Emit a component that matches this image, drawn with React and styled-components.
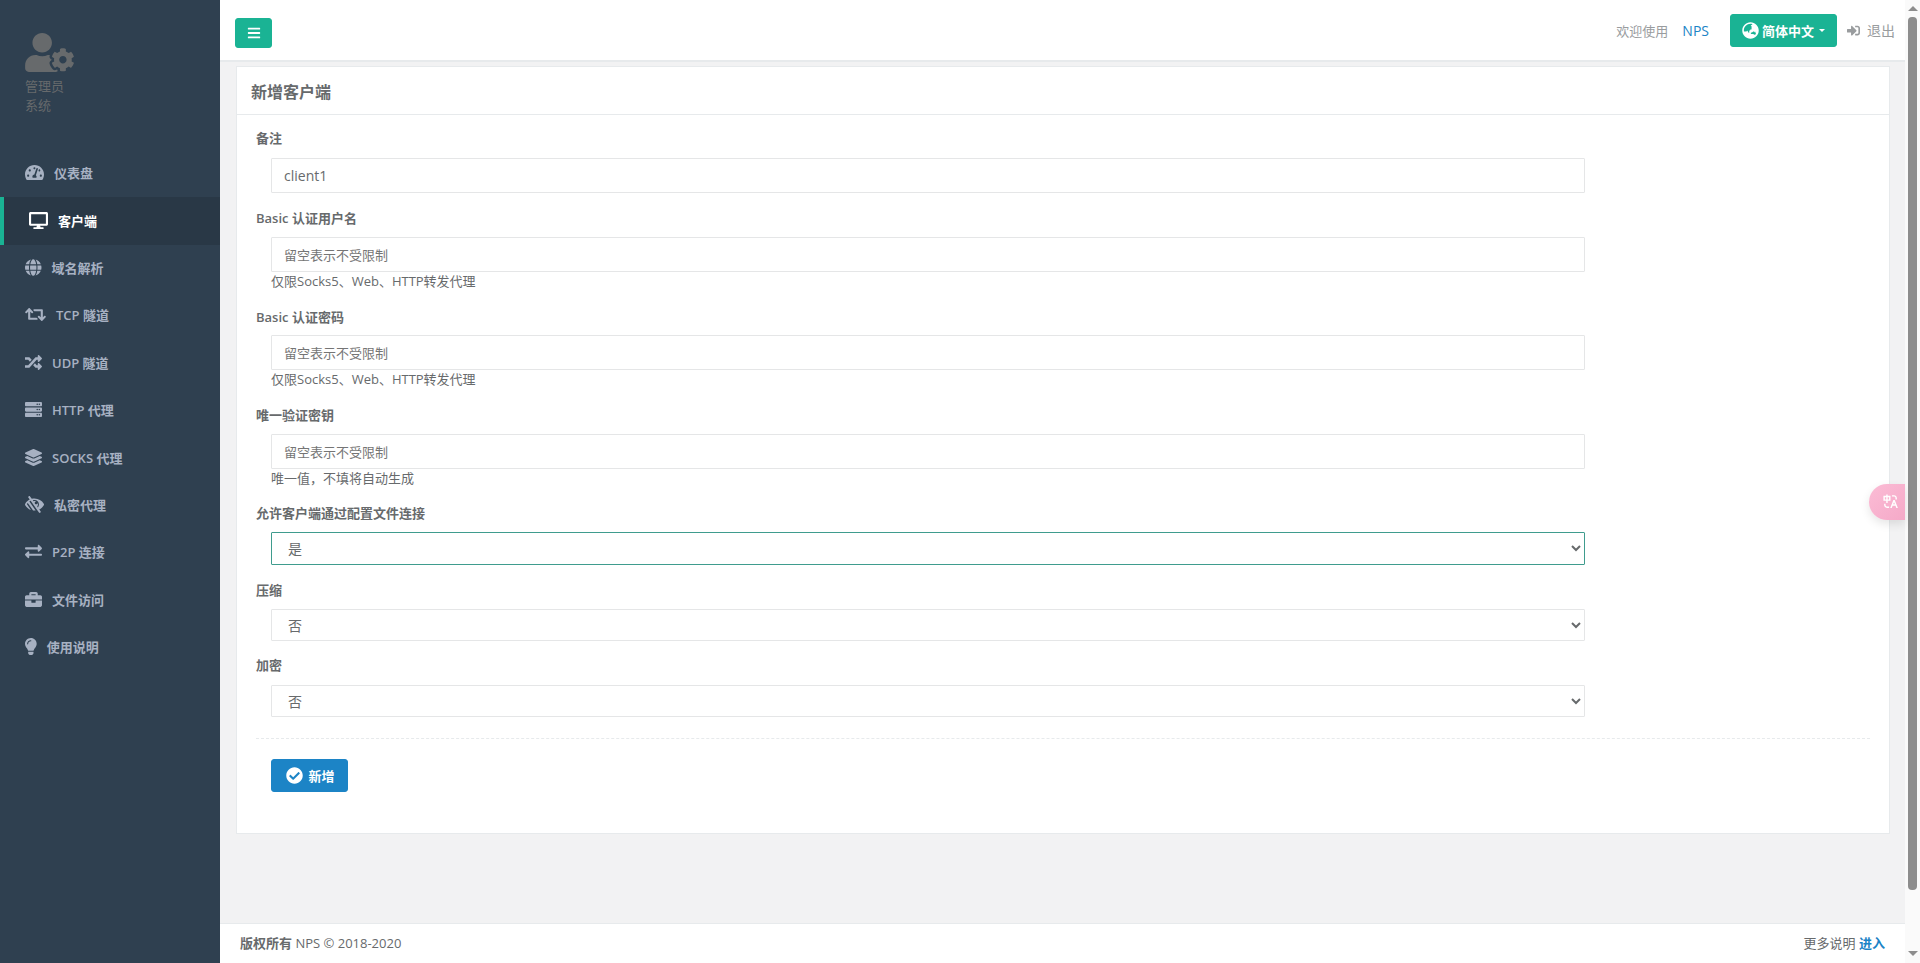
import React from "react";
import styled, { createGlobalStyle } from "styled-components";
import {
  FaBars,
  FaBriefcase,
  FaCheckCircle,
  FaDesktop,
  FaExchangeAlt,
  FaGlobe,
  FaGlobeAsia,
  FaLayerGroup,
  FaLightbulb,
  FaLowVision,
  FaRandom,
  FaRetweet,
  FaServer,
  FaSignInAlt,
  FaTachometerAlt,
  FaUserCog,
} from "react-icons/fa";
import { RiTranslate } from "react-icons/ri";

const GlobalStyle = createGlobalStyle`
  html, body {
    margin: 0;
    height: 100%;
    overflow: hidden;
  }
  body {
    font-family: "Open Sans", "Noto Sans CJK SC", sans-serif;
    font-size: 13px;
    color: #676a6c;
  }
  * {
    box-sizing: border-box;
  }
`;

const Page = styled.div`
  display: flex;
  height: 963px;
  position: relative;
`;

// Sidebar

const Sidebar = styled.nav`
  width: 220px;
  flex-shrink: 0;
  background-color: #2f4050;
`;

const Profile = styled.div`
  height: 150px;
  padding: 33px 0 0 25px;
  color: #676a6c;
  line-height: 19px;
  svg {
    display: block;
    width: 49px;
    height: 39px;
    margin-bottom: 5px;
  }
`;

const NavItem = styled.a`
  display: flex;
  align-items: center;
  gap: 10px;
  height: 47.4px;
  padding: 0 0 2px 25px;
  font-weight: 600;
  color: ${(p) => (p.$active ? "#fff" : "#a7b1c2")};
  background-color: ${(p) => (p.$active ? "#293846" : "transparent")};
  border-left: ${(p) => (p.$active ? "4px solid #1ab394" : "none")};
  svg {
    width: ${(p) => p.$iconWidth}px;
    height: 17px;
    flex-shrink: 0;
  }
`;

// Main column

const Main = styled.div`
  flex: 1;
  min-width: 0;
  display: flex;
  flex-direction: column;
  background-color: #f2f2f3;
`;

const TopBar = styled.header`
  height: 62px;
  flex-shrink: 0;
  display: flex;
  align-items: center;
  justify-content: space-between;
  padding: 0 10px 0 15px;
  background-color: #fff;
  border-bottom: 2px solid #e7eaec;
`;

const MenuButton = styled.button`
  width: 37px;
  height: 30px;
  margin-top: 6px;
  padding: 0;
  display: flex;
  align-items: center;
  justify-content: center;
  color: #fff;
  background-color: #1ab394;
  border: 1px solid #1ab394;
  border-radius: 3px;
  font-size: 14px;
`;

const TopRight = styled.div`
  display: flex;
  align-items: center;
  color: #999c9e;
`;

const NpsLink = styled.a`
  margin: 0 21px 0 14px;
  color: #1c84c6;
  font-size: 14px;
`;

const LangButton = styled.button`
  width: 107px;
  height: 33px;
  padding: 0;
  display: flex;
  align-items: center;
  justify-content: center;
  gap: 3px;
  color: #fff;
  background-color: #1ab394;
  border: 1px solid #1ab394;
  border-radius: 3px;
  font-family: inherit;
  font-size: 13px;
  font-weight: 600;
  svg {
    width: 17px;
    height: 17px;
  }
`;

const Caret = styled.span`
  margin-left: 2px;
  border-top: 3px solid #fff;
  border-left: 3px solid transparent;
  border-right: 3px solid transparent;
`;

const LogoutLink = styled.a`
  display: flex;
  align-items: center;
  gap: 7px;
  margin-left: 10px;
  font-size: 14px;
  svg {
    width: 13px;
    height: 13px;
  }
`;

const Content = styled.main`
  flex: 1;
  padding: 4px 15px 0 16px;
`;

const Card = styled.section`
  height: 768px;
  background-color: #fff;
  border: 1px solid #e7eaec;
`;

const CardHeader = styled.div`
  height: 48px;
  display: flex;
  align-items: center;
  padding-left: 14px;
  border-bottom: 1px solid #e7eaec;
`;

const Title = styled.h5`
  margin: 0;
  font-size: 16px;
  font-weight: 600;
`;

const CardBody = styled.div`
  padding: 13px 19px 0;
`;

const FormGroup = styled.div`
  margin-bottom: ${(p) => p.$gap}px;
`;

const Label = styled.label`
  display: block;
  height: 20px;
  margin-bottom: ${(p) => p.$gap}px;
  line-height: 20px;
  font-weight: 600;
`;

const Field = styled.div`
  width: 1314px;
  margin-left: 15px;
`;

const TextInput = styled.input`
  display: block;
  width: 100%;
  height: 35px;
  padding: 0 12px;
  color: #676a6c;
  background-color: #fff;
  border: 1px solid #e5e6e7;
  border-radius: 1px;
  outline: none;
  font-family: inherit;
  font-size: 14px;
  &::placeholder {
    color: #757575;
    font-size: 13px;
  }
`;

const Help = styled.span`
  display: block;
  height: 19px;
  line-height: 19px;
  color: #676a6c;
`;

const Select = styled.select`
  display: block;
  width: 100%;
  height: ${(p) => (p.$focused ? 33 : 32)}px;
  padding: 0 12px;
  color: #676a6c;
  background-color: #fff;
  border: 1px solid ${(p) => (p.$focused ? "#3f9c8e" : "#e5e6e7")};
  border-radius: 1px;
  outline: none;
  font-family: inherit;
  font-size: 14px;
`;

const Divider = styled.div`
  margin: 21px 0 20px;
  border-top: 1px dashed #e7eaec;
`;

const SaveButton = styled.button`
  width: 77px;
  height: 33px;
  margin-left: 15px;
  padding: 0 0 0 2px;
  display: flex;
  align-items: center;
  justify-content: center;
  gap: 5px;
  color: #fff;
  background-color: #1c84c6;
  border: 1px solid #1c84c6;
  border-radius: 3px;
  font-family: inherit;
  font-size: 13px;
  font-weight: 600;
  svg {
    width: 17px;
    height: 17px;
  }
`;

const Footer = styled.footer`
  height: 40px;
  flex-shrink: 0;
  display: flex;
  align-items: center;
  justify-content: space-between;
  padding: 0 20px 2px;
  background-color: #fff;
  border-top: 1px solid #e7eaec;
`;

const MoreLink = styled.a`
  color: #1c84c6;
  font-weight: 600;
`;

// Floating translate pill and the window scrollbar

const TranslatePill = styled.div`
  position: absolute;
  top: 484px;
  right: 15px;
  width: 36px;
  height: 36px;
  display: flex;
  align-items: center;
  justify-content: center;
  padding: 0 0 2px 6px;
  color: #fff;
  background: linear-gradient(135deg, #fbbcd5, #f5a9c8);
  border-radius: 18px 0 0 18px;
  box-shadow: 0 4px 10px rgba(0, 0, 0, 0.1);
  svg {
    width: 17px;
    height: 17px;
  }
`;

const Scrollbar = styled.div`
  width: 15px;
  flex-shrink: 0;
  display: flex;
  flex-direction: column;
  align-items: center;
  background-color: #fafafa;
`;

const ArrowUp = styled.span`
  margin-top: 6px;
  border-bottom: 5px solid #8d8d8d;
  border-left: 5px solid transparent;
  border-right: 5px solid transparent;
`;

const ArrowDown = styled.span`
  margin-top: auto;
  margin-bottom: 7px;
  border-top: 5px solid #8d8d8d;
  border-left: 5px solid transparent;
  border-right: 5px solid transparent;
`;

const Thumb = styled.span`
  width: 9px;
  height: 873px;
  margin-top: 6px;
  background-color: #8d8d8d;
  border-radius: 4px;
`;

const navItems = [
  { icon: FaTachometerAlt, label: "仪表盘", width: 19 },
  { icon: FaDesktop, label: "客户端", width: 19, active: true },
  { icon: FaGlobe, label: "域名解析", width: 16.5 },
  { icon: FaRetweet, label: "TCP 隧道", width: 21 },
  { icon: FaRandom, label: "UDP 隧道", width: 17 },
  { icon: FaServer, label: "HTTP 代理", width: 17 },
  { icon: FaLayerGroup, label: "SOCKS 代理", width: 17 },
  { icon: FaLowVision, label: "私密代理", width: 19 },
  { icon: FaExchangeAlt, label: "P2P 连接", width: 17 },
  { icon: FaBriefcase, label: "文件访问", width: 17 },
  { icon: FaLightbulb, label: "使用说明", width: 11.7 },
];

const PLACEHOLDER = "留空表示不受限制";
const BASIC_HELP = "仅限Socks5、Web、HTTP转发代理";

export default function App() {
  return (
    <Page>
      <GlobalStyle />
      <Sidebar>
        <Profile>
          <FaUserCog />
          <div>管理员</div>
          <div>系统</div>
        </Profile>
        {navItems.map(({ icon: Icon, label, width, active }) => (
          <NavItem key={label} $active={active} $iconWidth={width}>
            <Icon />
            <span>{label}</span>
          </NavItem>
        ))}
      </Sidebar>

      <Main>
        <TopBar>
          <MenuButton>
            <FaBars />
          </MenuButton>
          <TopRight>
            <span>欢迎使用</span>
            <NpsLink>NPS</NpsLink>
            <LangButton>
              <FaGlobeAsia />
              简体中文
              <Caret />
            </LangButton>
            <LogoutLink>
              <FaSignInAlt />
              退出
            </LogoutLink>
          </TopRight>
        </TopBar>

        <Content>
          <Card>
            <CardHeader>
              <Title>新增客户端</Title>
            </CardHeader>
            <CardBody>
              <FormGroup $gap={15}>
                <Label $gap={10}>备注</Label>
                <Field>
                  <TextInput defaultValue="client1" />
                </Field>
              </FormGroup>
              <FormGroup $gap={16}>
                <Label $gap={9}>Basic 认证用户名</Label>
                <Field>
                  <TextInput placeholder={PLACEHOLDER} />
                  <Help>{BASIC_HELP}</Help>
                </Field>
              </FormGroup>
              <FormGroup $gap={16}>
                <Label $gap={8}>Basic 认证密码</Label>
                <Field>
                  <TextInput placeholder={PLACEHOLDER} />
                  <Help>{BASIC_HELP}</Help>
                </Field>
              </FormGroup>
              <FormGroup $gap={15}>
                <Label $gap={9}>唯一验证密钥</Label>
                <Field>
                  <TextInput placeholder={PLACEHOLDER} />
                  <Help>唯一值，不填将自动生成</Help>
                </Field>
              </FormGroup>
              <FormGroup $gap={15}>
                <Label $gap={9}>允许客户端通过配置文件连接</Label>
                <Field>
                  <Select $focused defaultValue="1">
                    <option value="1">是</option>
                    <option value="0">否</option>
                  </Select>
                </Field>
              </FormGroup>
              <FormGroup $gap={14}>
                <Label $gap={9}>压缩</Label>
                <Field>
                  <Select defaultValue="0">
                    <option value="1">是</option>
                    <option value="0">否</option>
                  </Select>
                </Field>
              </FormGroup>
              <FormGroup $gap={0}>
                <Label $gap={10}>加密</Label>
                <Field>
                  <Select defaultValue="0">
                    <option value="1">是</option>
                    <option value="0">否</option>
                  </Select>
                </Field>
              </FormGroup>
              <Divider />
              <SaveButton>
                <FaCheckCircle />
                新增
              </SaveButton>
            </CardBody>
          </Card>
        </Content>

        <Footer>
          <span>
            <strong>版权所有</strong> NPS © 2018-2020
          </span>
          <span>
            更多说明 <MoreLink>进入</MoreLink>
          </span>
        </Footer>
      </Main>

      <Scrollbar>
        <ArrowUp />
        <Thumb />
        <ArrowDown />
      </Scrollbar>

      <TranslatePill>
        <RiTranslate />
      </TranslatePill>
    </Page>
  );
}
